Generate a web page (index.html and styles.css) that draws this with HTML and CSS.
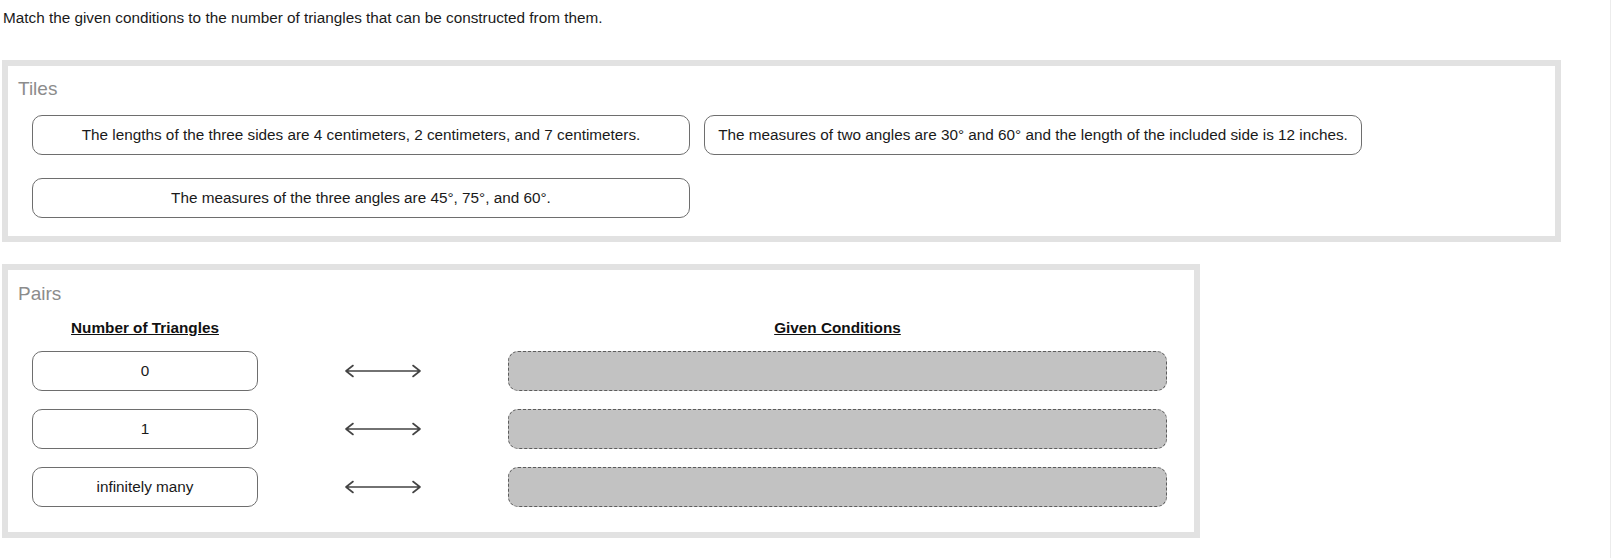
FILE: index.html
```html
<!DOCTYPE html>
<html lang="en">
<head>
<meta charset="utf-8">
<title>Match triangles</title>
<link rel="stylesheet" href="styles.css">
</head>
<body>
<div class="page">
  <p class="prompt">Match the given conditions to the number of triangles that can be constructed from them.</p>

  <section class="box tiles-box">
    <div class="box-label">Tiles</div>
    <div class="tiles">
      <div class="tile">The lengths of the three sides are 4 centimeters, 2 centimeters, and 7 centimeters.</div>
      <div class="tile">The measures of two angles are 30° and 60° and the length of the included side is 12 inches.</div>
      <div class="tile">The measures of the three angles are 45°, 75°, and 60°.</div>
    </div>
  </section>

  <section class="box pairs-box">
    <div class="box-label">Pairs</div>
    <div class="pairs">
      <div class="col-head">Number of Triangles</div>
      <div class="col-head"></div>
      <div class="col-head">Given Conditions</div>

      <div class="tile small">0</div>
      <div class="arrow"><svg width="78" height="14" viewBox="0 0 78 14"><path d="M2 7H76M9 1.5L2 7L9 12.5M69 1.5L76 7L69 12.5" fill="none" stroke="#444" stroke-width="1.6" stroke-linecap="round" stroke-linejoin="round"/></svg></div>
      <div class="slot"></div>

      <div class="tile small">1</div>
      <div class="arrow"><svg width="78" height="14" viewBox="0 0 78 14"><path d="M2 7H76M9 1.5L2 7L9 12.5M69 1.5L76 7L69 12.5" fill="none" stroke="#444" stroke-width="1.6" stroke-linecap="round" stroke-linejoin="round"/></svg></div>
      <div class="slot"></div>

      <div class="tile small">infinitely many</div>
      <div class="arrow"><svg width="78" height="14" viewBox="0 0 78 14"><path d="M2 7H76M9 1.5L2 7L9 12.5M69 1.5L76 7L69 12.5" fill="none" stroke="#444" stroke-width="1.6" stroke-linecap="round" stroke-linejoin="round"/></svg></div>
      <div class="slot"></div>
    </div>
  </section>
</div>
</body>
</html>
```

FILE: styles.css
```css
html, body {
  margin: 0;
  padding: 0;
  background: #fff;
}

body {
  font-family: "Liberation Sans", Arial, sans-serif;
  font-size: 15.3px;
  color: #1a1a1a;
}

.page {
  box-sizing: border-box;
  width: 1611px;
  min-height: 100vh;
  padding: 0 0 0 2px;
  border-right: 1px solid #ececec;
  overflow: hidden;
}

.prompt {
  margin: 9px 0 0 1px;
  line-height: 17px;
}

.box {
  box-sizing: border-box;
  border: 6px solid #e2e2e2;
  background: #fff;
}

.tiles-box {
  width: 1559px;
  margin-top: 34px;
  padding: 12px 0 18px;
}

.pairs-box {
  width: 1198px;
  margin-top: 22px;
  padding: 13px 0 25px;
}

.box-label {
  font-size: 19px;
  line-height: 22px;
  color: #8c8c8c;
  padding-left: 10px;
}

.tiles {
  display: flex;
  flex-wrap: wrap;
  gap: 23px 14px;
  margin-top: 15px;
  padding-left: 24px;
}

.tile {
  box-sizing: border-box;
  width: 658px;
  height: 40px;
  border: 1px solid #6e6e6e;
  border-radius: 10px;
  background: #fff;
  display: flex;
  align-items: center;
  justify-content: center;
  text-align: center;
  white-space: nowrap;
}

.pairs {
  display: grid;
  grid-template-columns: 226px 250px 659px;
  grid-template-rows: auto repeat(3, 40px);
  row-gap: 18px;
  margin-top: 14px;
  padding-left: 24px;
}

.col-head {
  font-weight: bold;
  text-decoration: underline;
  text-align: center;
  line-height: 17px;
  height: 17px;
  margin-bottom: -3px;
  color: #111;
}

.tile.small {
  width: 226px;
}

.arrow {
  display: flex;
  align-items: center;
  justify-content: center;
}

.arrow svg {
  display: block;
}

.slot {
  box-sizing: border-box;
  height: 40px;
  border: 1px dashed #5c5c5c;
  border-radius: 10px;
  background: #c2c2c2;
}
```
